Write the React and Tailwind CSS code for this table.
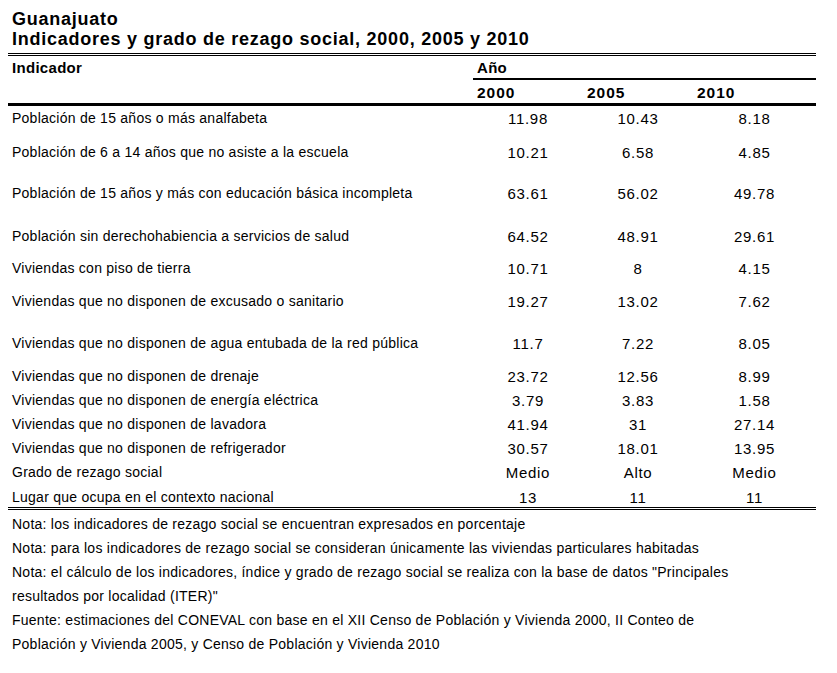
import React from 'react';

const rows = [
  { label: 'Población de 15 años o más analfabeta', v: ['11.98', '10.43', '8.18'], h: 'h-[22px]' },
  { label: 'Población de 6 a 14 años que no asiste a la escuela', v: ['10.21', '6.58', '4.85'], h: 'h-[34px]' },
  { label: 'Población de 15 años y más con educación básica incompleta', v: ['63.61', '56.02', '49.78'], h: 'h-[41px]' },
  { label: 'Población sin derechohabiencia a servicios de salud', v: ['64.52', '48.91', '29.61'], h: 'h-[43px]' },
  { label: 'Viviendas con piso de tierra', v: ['10.71', '8', '4.15'], h: 'h-[32px]' },
  { label: 'Viviendas que no disponen de excusado o sanitario', v: ['19.27', '13.02', '7.62'], h: 'h-[33px]' },
  { label: 'Viviendas que no disponen de agua entubada de la red pública', v: ['11.7', '7.22', '8.05'], h: 'h-[42px]' },
  { label: 'Viviendas que no disponen de drenaje', v: ['23.72', '12.56', '8.99'], h: 'h-[33px]' },
  { label: 'Viviendas que no disponen de energía eléctrica', v: ['3.79', '3.83', '1.58'], h: 'h-[24px]' },
  { label: 'Viviendas que no disponen de lavadora', v: ['41.94', '31', '27.14'], h: 'h-[24px]' },
  { label: 'Viviendas que no disponen de refrigerador', v: ['30.57', '18.01', '13.95'], h: 'h-[24px]' },
  { label: 'Grado de rezago social', v: ['Medio', 'Alto', 'Medio'], h: 'h-[24px]' },
  { label: 'Lugar que ocupa en el contexto nacional', v: ['13', '11', '11'], h: 'h-[25px]' },
];

const notes = [
  'Nota: los indicadores de rezago social se encuentran expresados en porcentaje',
  'Nota: para los indicadores de rezago social se consideran únicamente las viviendas particulares habitadas',
  'Nota: el cálculo de los indicadores, índice y grado de rezago social se realiza con la base de datos "Principales',
  'resultados por localidad (ITER)"',
  'Fuente: estimaciones del CONEVAL con base en el XII Censo de Población y Vivienda 2000, II Conteo de',
  'Población y Vivienda 2005, y Censo de Población y Vivienda 2010',
];

export default function App() {
  return (
    <div className="min-h-screen w-[837px] bg-white text-black font-['Liberation_Sans',Arial,sans-serif]">
      <div className="ml-[8px] w-[808px]">
        {/* Title */}
        <div className="pt-[9px] pb-[4px] pl-[4px] border-b-[3px] border-double border-black text-[18px] leading-[20px] font-bold tracking-[0.75px]">
          <div>Guanajuato</div>
          <div>Indicadores y grado de rezago social, 2000, 2005 y 2010</div>
        </div>

        {/* Header */}
        <div className="grid grid-cols-[465px_343px] border-b-[3px] border-black text-[15px] leading-[18px] font-bold">
          <div className="pl-[4px] pt-[3px] tracking-[0.3px]">Indicador</div>
          <div>
            <div className="h-[24px] pl-[4px] pt-[3px] border-b-2 border-black tracking-[0.3px]">Año</div>
            <div className="grid grid-cols-[110px_110px_123px] h-[23px] pt-[4px] text-[15.5px] tracking-[1px]">
              <div className="pl-[4px]">2000</div>
              <div className="pl-[4px]">2005</div>
              <div className="pl-[4px]">2010</div>
            </div>
          </div>
        </div>

        {/* Body */}
        <div className="border-b-[3px] border-double border-black">
          {rows.map((r) => (
            <div key={r.label} className={`grid grid-cols-[465px_110px_110px_123px] items-end ${r.h}`}>
              <div className="pl-[4px] pb-[2px] text-[14px] leading-[16px] tracking-[0.25px] whitespace-nowrap">{r.label}</div>
              {r.v.map((v, i) => (
                <div key={i} className="pb-[1px] text-center text-[15px] leading-[16px] tracking-[0.7px]">{v}</div>
              ))}
            </div>
          ))}
        </div>

        {/* Notes */}
        <div className="pt-[2px] pl-[4px] text-[14px] leading-[24px] tracking-[0.25px]">
          {notes.map((n) => (
            <div key={n} className="whitespace-nowrap">{n}</div>
          ))}
        </div>
      </div>
    </div>
  );
}
